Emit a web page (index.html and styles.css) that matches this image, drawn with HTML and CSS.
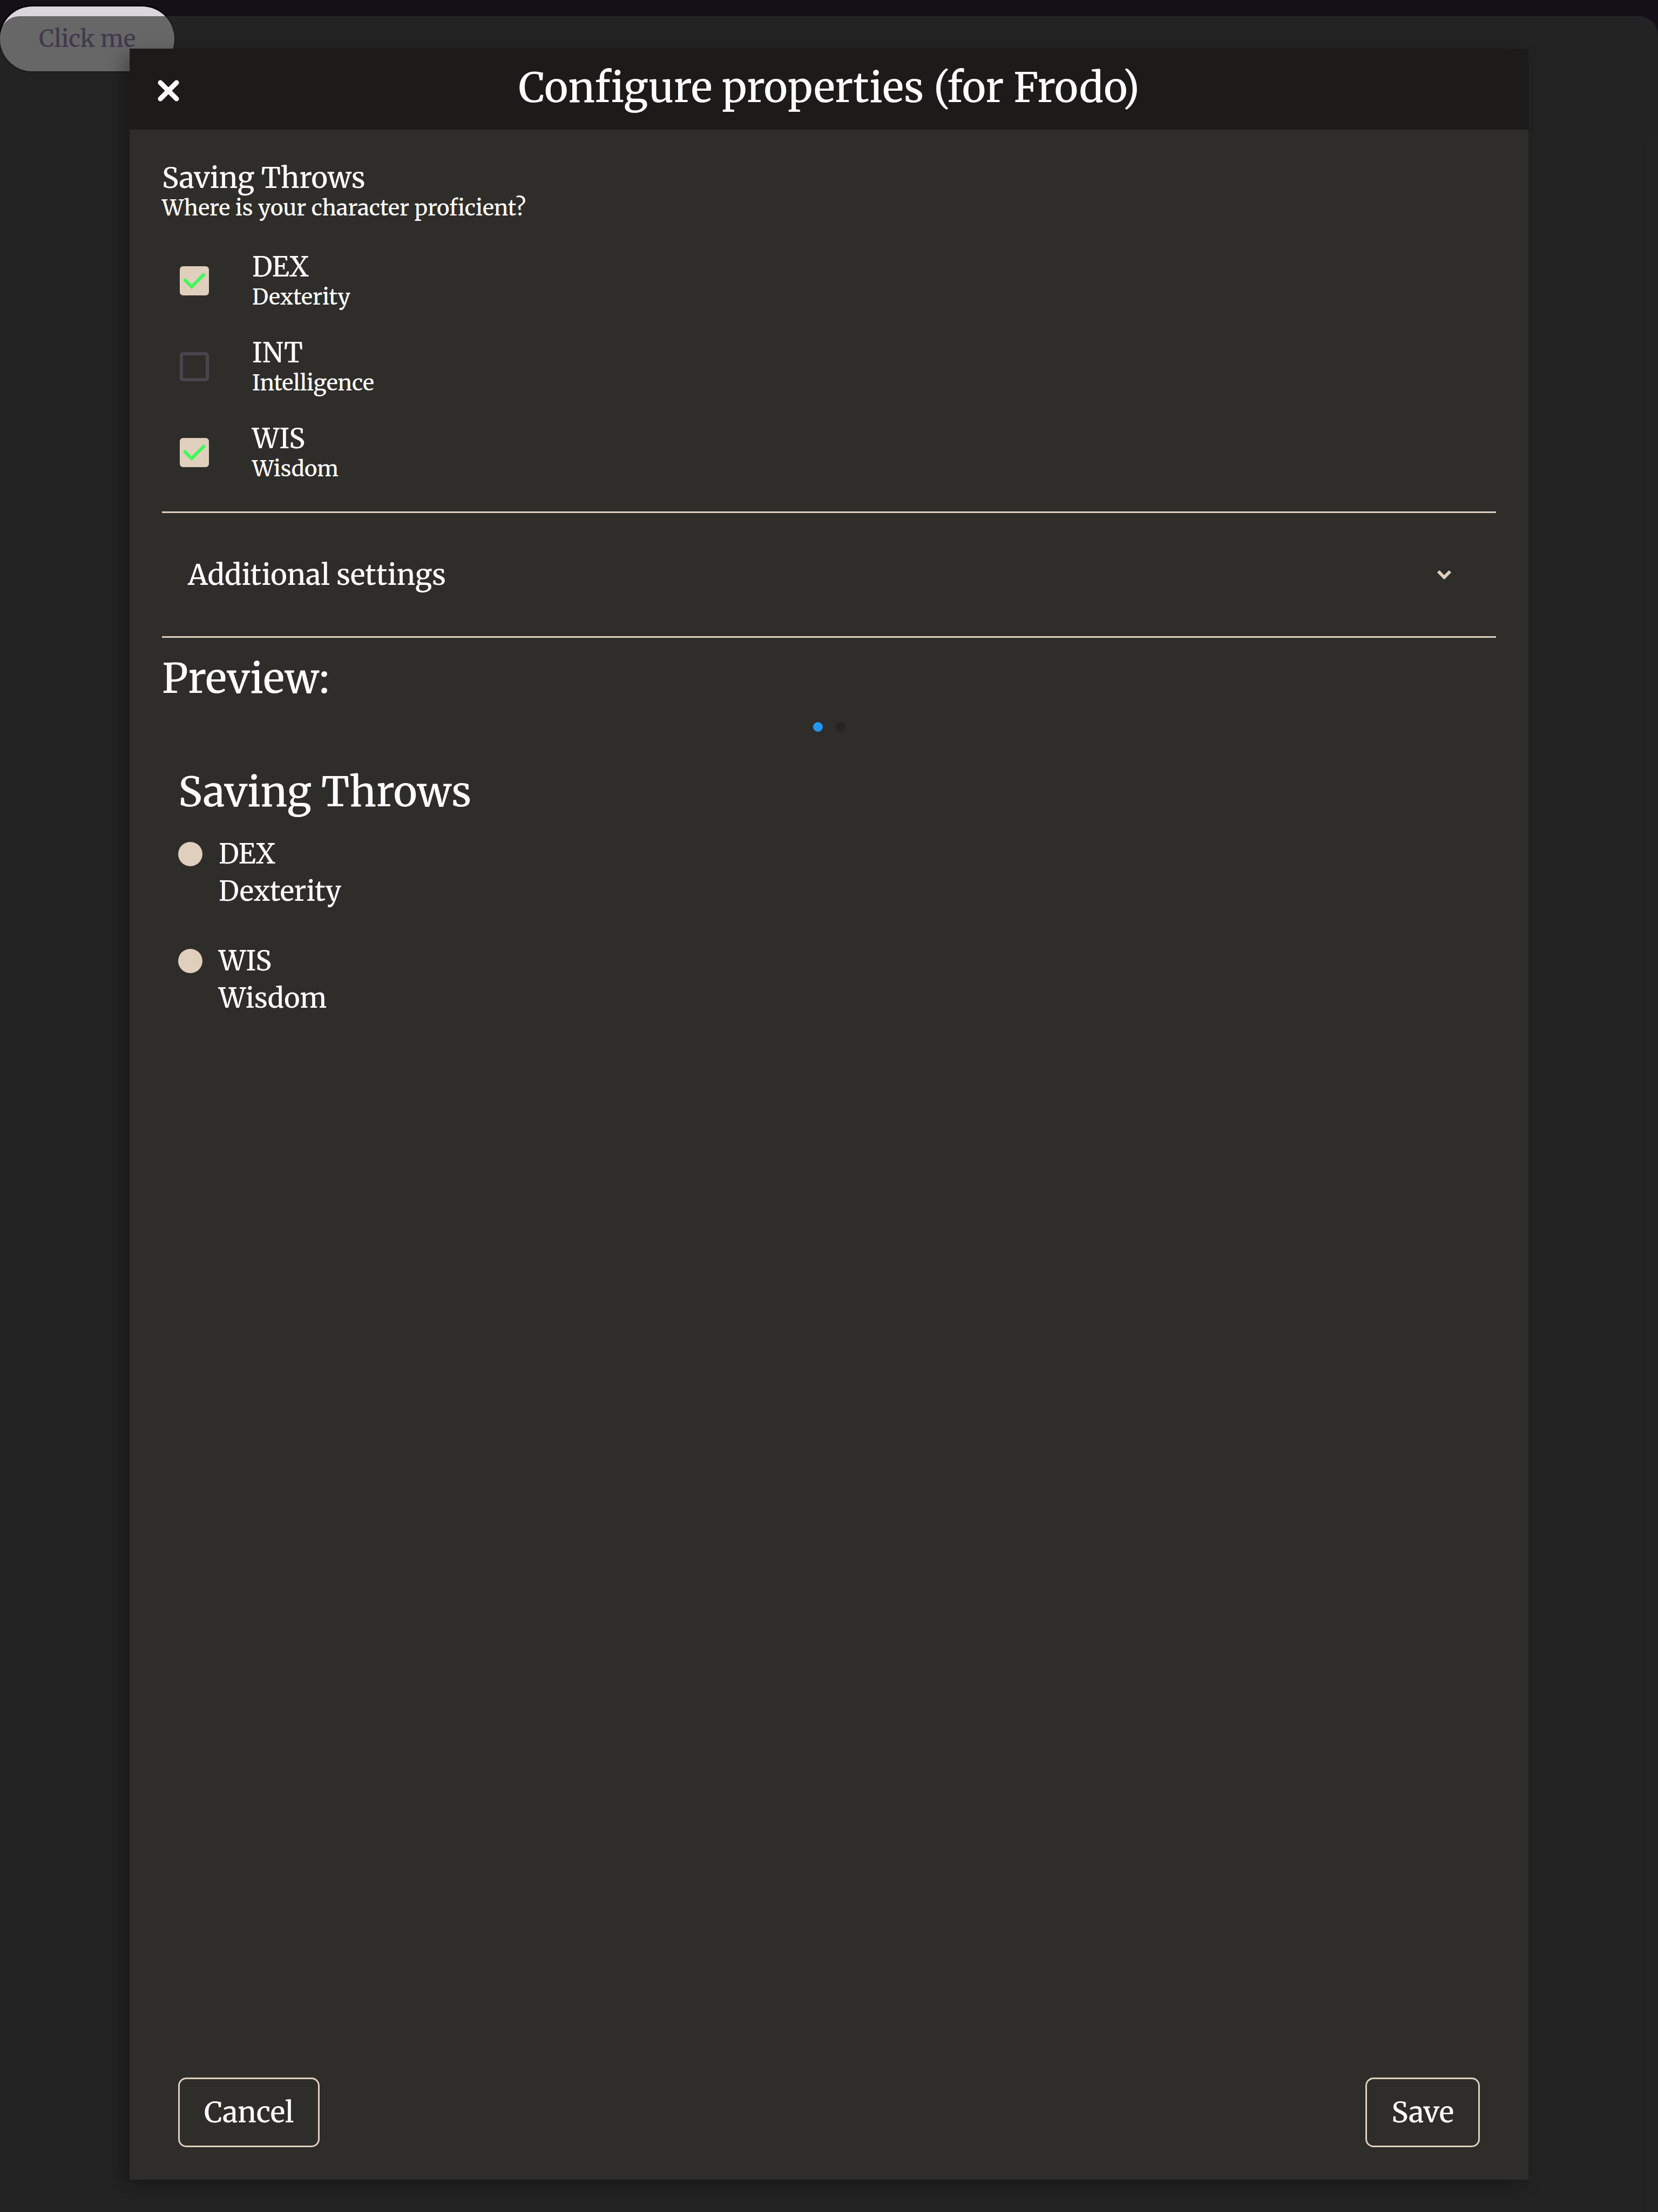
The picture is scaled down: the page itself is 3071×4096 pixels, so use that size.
FILE: index.html
```html
<!DOCTYPE html>
<html lang="en">
<head>
<meta charset="utf-8">
<meta name="viewport" content="width=device-width, initial-scale=1">
<title>Configure properties</title>
<link rel="stylesheet" href="styles.css">
</head>
<body>
<div class="page">
  <button class="page-button" type="button">Click me</button>
</div>
<div class="sheet">
  <section class="dialog" role="dialog" aria-labelledby="dialog-title">
    <header class="dialog-header">
      <button class="close" type="button" aria-label="Close">
        <svg class="close-icon" viewBox="0 0 48 48" aria-hidden="true"><path d="M9 9L39 39M39 9L9 39"/></svg>
      </button>
      <h1 class="dialog-title" id="dialog-title">Configure properties (for Frodo)</h1>
    </header>
    <div class="dialog-body">
      <h2 class="section-title">Saving Throws</h2>
      <p class="section-hint">Where is your character proficient?</p>
      <div class="options">
        <label class="option">
          <span class="box"><input class="box-input" type="checkbox" checked><svg class="box-tick" viewBox="0 0 54 54" aria-hidden="true"><path d="M8 24L22 38L46 14"/></svg></span>
          <span class="option-text"><span class="option-name">DEX</span><span class="option-detail">Dexterity</span></span>
        </label>
        <label class="option">
          <span class="box"><input class="box-input" type="checkbox"><svg class="box-tick" viewBox="0 0 54 54" aria-hidden="true"><path d="M8 24L22 38L46 14"/></svg></span>
          <span class="option-text"><span class="option-name">INT</span><span class="option-detail">Intelligence</span></span>
        </label>
        <label class="option">
          <span class="box"><input class="box-input" type="checkbox" checked><svg class="box-tick" viewBox="0 0 54 54" aria-hidden="true"><path d="M8 24L22 38L46 14"/></svg></span>
          <span class="option-text"><span class="option-name">WIS</span><span class="option-detail">Wisdom</span></span>
        </label>
      </div>
      <button class="settings" type="button" aria-expanded="false">
        <span>Additional settings</span>
        <svg class="chevron" viewBox="0 0 72 72" aria-hidden="true"><path d="M25 30L36 41L47 30"/></svg>
      </button>
      <h2 class="preview-title">Preview:</h2>
      <div class="dots"><span class="dot dot-active"></span><span class="dot"></span></div>
      <div class="preview">
        <h3 class="preview-heading">Saving Throws</h3>
        <ul class="throws">
          <li class="throw"><span class="bullet"></span><span>DEX<br>Dexterity</span></li>
          <li class="throw"><span class="bullet"></span><span>WIS<br>Wisdom</span></li>
        </ul>
      </div>
    </div>
    <footer class="dialog-footer">
      <button class="action" type="button">Cancel</button>
      <button class="action" type="button">Save</button>
    </footer>
  </section>
</div>
</body>
</html>
```
FILE: styles.css
```css
* {
  box-sizing: border-box;
}

body {
  margin: 0;
  min-height: 100vh;
  position: relative;
  background: #131017;
  color: #fff;
  font-family: Merriweather, "DejaVu Serif", serif;
  font-size: 50px;
  font-weight: 500;
}

h1, h2, h3, p, ul {
  margin: 0;
  padding: 0;
  font-weight: 500;
}

button {
  border: 0;
  background: none;
  color: inherit;
  font: inherit;
}

.page {
  position: absolute;
  inset: 0;
  padding-top: 12px;
}

.page-button {
  display: block;
  height: 120px;
  padding: 0 72px;
  border-radius: 60px;
  background: #dad6dd;
  box-shadow: 0 0 0 3px #000;
  color: #63508c;
  font-size: 43px;
}

/* Translucent bottom sheet over the page */
.sheet {
  position: relative;
  display: flex;
  min-height: 100vh;
  padding: 90px 240px 60px;
}

.sheet::before {
  content: "";
  position: absolute;
  inset: 30px 0 0;
  border-radius: 36px 36px 0 0;
  background: rgba(45, 46, 44, 0.66);
}

.dialog {
  position: relative;
  display: flex;
  flex-direction: column;
  flex: 1;
  background: #2f2d2a;
  box-shadow: -12px 12px 30px rgba(0, 0, 0, 0.3);
}

.dialog-header {
  display: grid;
  grid-template-columns: 144px 1fr 144px;
  align-items: center;
  height: 150px;
  background: #1d1b19;
}

.close {
  display: flex;
  justify-content: center;
  padding: 6px 0 0;
}

.close-icon {
  width: 48px;
  height: 48px;
  fill: none;
  stroke: #fff;
  stroke-width: 9;
  stroke-linecap: round;
}

.dialog-title {
  padding-bottom: 6px;
  font-size: 75px;
  line-height: 90px;
  text-align: center;
}

.dialog-body {
  flex: 1;
  padding: 60px 60px 0;
}

.section-title {
  font-size: 52px;
  line-height: 60px;
}

.section-hint {
  font-size: 40px;
  line-height: 50px;
}

.options {
  padding: 30px 0;
}

.option {
  display: flex;
  align-items: center;
  gap: 80px;
  height: 159px;
  padding-left: 33px;
}

.box {
  display: grid;
}

.box-input,
.box-tick {
  grid-area: 1 / 1;
  width: 54px;
  height: 54px;
}

.box-input {
  appearance: none;
  margin: 0;
  border: 6px solid #49454f;
  border-radius: 6px;
}

.box-input:checked {
  border-color: #dfcfbc;
  background: #dfcfbc;
}

.box-tick {
  visibility: hidden;
  pointer-events: none;
  fill: none;
  stroke: #3ff859;
  stroke-width: 6;
}

.box-input:checked + .box-tick {
  visibility: visible;
}

.option-text {
  display: flex;
  flex-direction: column;
}

.option-name {
  line-height: 60px;
}

.option-detail {
  font-size: 40px;
  line-height: 50px;
}

.settings {
  display: flex;
  align-items: center;
  justify-content: space-between;
  width: 100%;
  height: 234px;
  padding: 0 60px 0 48px;
  border-top: 3px solid #dfcfbc;
  border-bottom: 3px solid #dfcfbc;
  font-size: 52px;
}

.chevron {
  width: 72px;
  height: 72px;
  fill: none;
  stroke: #dfcfbc;
  stroke-width: 6;
}

.preview-title {
  padding: 27px 0 33px;
  font-size: 75px;
  line-height: 96px;
}

.dots {
  display: flex;
  justify-content: center;
  gap: 24px;
}

.dot {
  width: 18px;
  height: 18px;
  border-radius: 50%;
  background: #252421;
}

.dot-active {
  background: #2196f3;
}

.preview {
  padding: 63px 30px 0;
}

.preview-heading {
  font-size: 75px;
  line-height: 96px;
}

.throws {
  display: grid;
  gap: 60px;
  padding-top: 33px;
  list-style: none;
}

.throw {
  display: flex;
  gap: 30px;
  line-height: 69px;
}

.bullet {
  width: 45px;
  height: 45px;
  margin-top: 12px;
  border-radius: 50%;
  background: #dfcfbc;
}

.dialog-footer {
  display: flex;
  justify-content: space-between;
  padding: 60px 90px;
}

.action {
  height: 129px;
  padding: 0 45px;
  border: 3px solid #dfcfbc;
  border-radius: 15px;
  font-size: 52px;
}
```
